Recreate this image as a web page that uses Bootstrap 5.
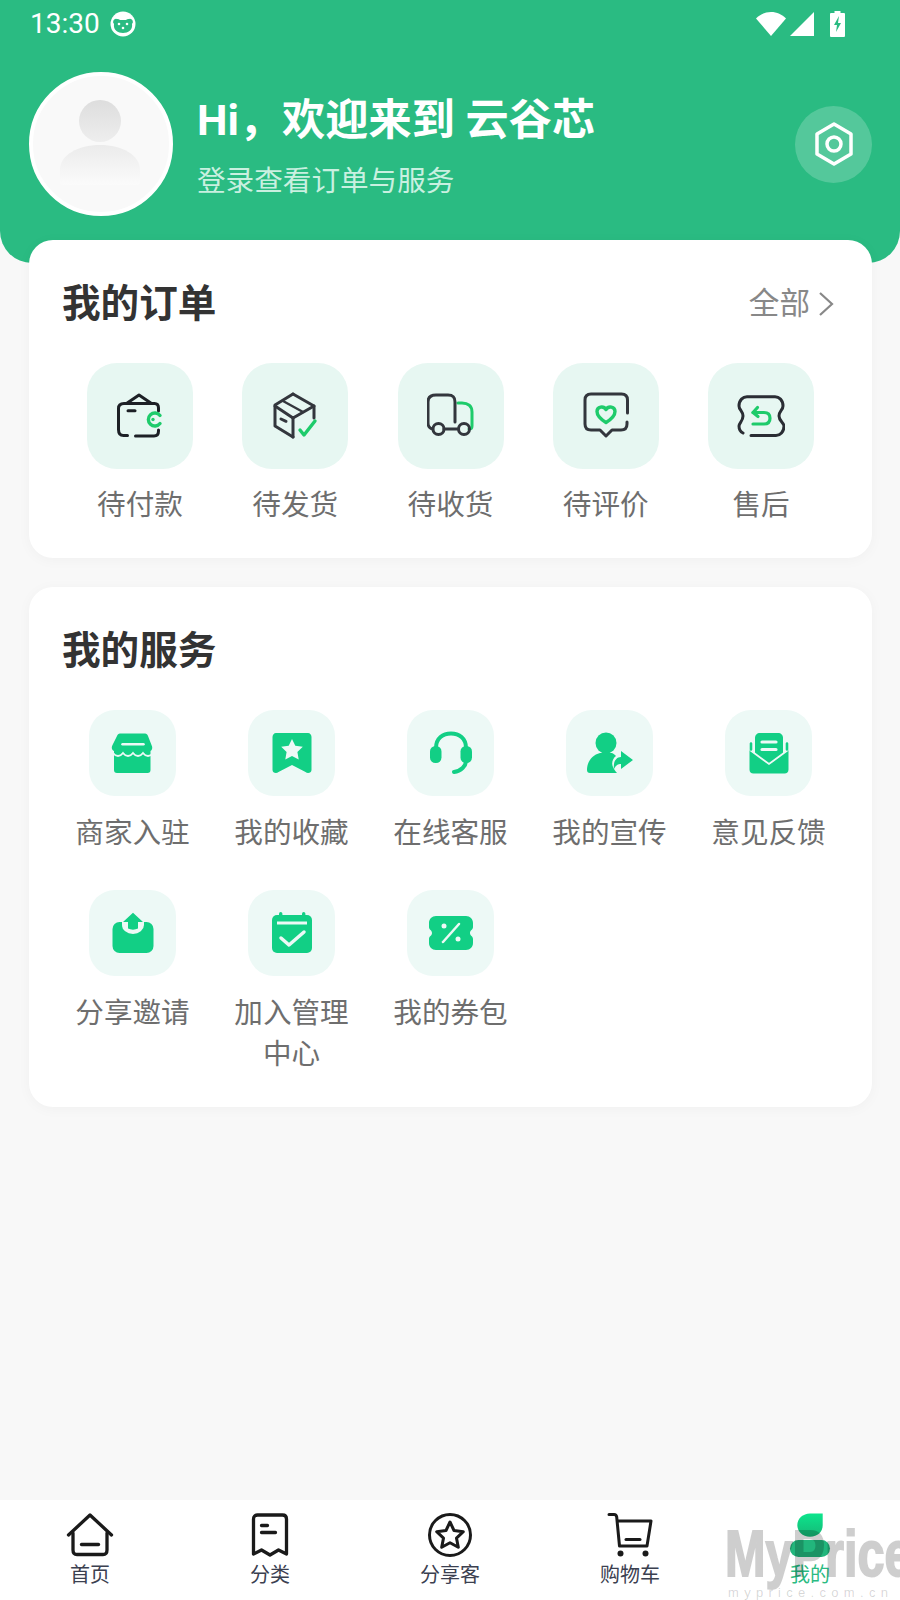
<!DOCTYPE html>
<html lang="zh-CN">
<head>
    <meta charset="UTF-8">
    <meta name="viewport" content="width=device-width, initial-scale=1">
    <title>我的</title>
    <link href="https://cdn.jsdelivr.net/npm/bootstrap@5.3.0/dist/css/bootstrap.min.css" rel="stylesheet">
    <style>
        body {
            background: #f8f8f8;
            font-family: Roboto, "Noto Sans CJK SC", sans-serif;
            min-height: 1600px;
            overflow: hidden;
        }
        .page-wrap { min-height: 1600px; }
        .hdr {
            background: #2abb82;
            height: 263px;
            border-radius: 0 0 32px 32px;
            padding: 0 28px 0 29px;
            color: #fff;
        }
        .status-row { height: 48px; padding-right: 27px; }
        .status-time { font-size: 28px; line-height: 48px; margin: 0 10px 0 1px; }
        .profile-row { margin-top: 24px; }
        .avatar-ring {
            width: 144px;
            height: 144px;
            border-radius: 50%;
            background: #f9f9f9;
            border: 4px solid #fff;
            flex: none;
        }
        .hi-text { font-size: 43.2px; font-weight: 700; line-height: 56px; margin: 0; }
        .sub-text { font-size: 28.6px; line-height: 40px; margin: 12px 0 0; color: #c9f0e0; }
        .profile-text { margin-left: 24px; padding-top: 6px; }
        .gear-btn {
            width: 77px;
            height: 77px;
            border-radius: 50%;
            background: rgba(255, 255, 255, .2);
            flex: none;
        }
        .panel {
            border: 0;
            border-radius: 24px;
            margin: 0 28px 29px 29px;
            box-shadow: 0 2px 14px rgba(0, 0, 0, .035);
        }
        .panel-order { margin-top: -23px; padding: 36px 58px 32px; }
        .panel-service { padding: 36px 24px 32px; }
        .panel-title { font-size: 38.6px; font-weight: 700; line-height: 56px; color: #333; margin: 0; }
        .panel-head { margin: 0 -24px 31px; }
        .panel-service .panel-title { padding-left: 9px; }
        .panel-order .panel-title { margin-left: -1px; }
        .more-link { font-size: 30.6px; color: #888; line-height: 56px; text-decoration: none; margin-right: 3px; }
        .order-item { width: 106px; }
        .order-tile {
            width: 106px;
            height: 106px;
            border-radius: 30px;
            background: #e7f7f2;
        }
        .item-label { font-size: 28.6px; line-height: 41px; color: #6e6e6e; text-align: center; }
        .order-item .item-label { margin: 16px -10px 0; }
        .service-tile {
            width: 87px;
            height: 86px;
            border-radius: 26px;
            background: #edf9f6;
        }
        .service-item .item-label { margin-top: 17px; max-width: 118px; }
        .service-second { margin-top: 36px; }
        .tabbar {
            height: 100px;
            background: #fff;
            overflow: hidden;
        }
        .tab-cell { width: 180px; padding-top: 12px; }
        .tab-label { font-size: 20px; line-height: 28px; color: #3b4050; margin-top: 1px; }
        .tab-on { color: #2abb82; }
        .mark-big {
            top: 19px;
            left: 725px;
            font-family: "Liberation Sans", sans-serif;
            font-weight: 700;
            font-size: 64px;
            line-height: 70px;
            color: #000;
            opacity: .19;
            -webkit-text-stroke: 2px #000;
            transform: scaleX(.76);
            transform-origin: left;
            white-space: nowrap;
        }
        .mark-small {
            top: 84px;
            left: 728px;
            font-family: "Liberation Sans", sans-serif;
            font-size: 13px;
            line-height: 18px;
            letter-spacing: 5.3px;
            color: rgba(0, 0, 0, .17);
            white-space: nowrap;
        }
    </style>
</head>
<body>
<div class="page-wrap d-flex flex-column">

    <!-- Header -->
    <header class="hdr">
        <div class="status-row d-flex align-items-center">
            <span class="status-time">13:30</span>
            <svg width="26" height="26" viewBox="0 0 26 26"><circle cx="13" cy="13" r="12.5" fill="#fff"/><path d="M4 13a3 3 0 0 1 3-5 4 4 0 0 1 3 1h6a4 4 0 0 1 3-1 3 3 0 0 1 3 5c1 6-4 9-9 9s-10-3-9-9z" fill="#2abb82"/><circle cx="9" cy="13" r="1.3" fill="#fff"/><circle cx="17" cy="13" r="1.3" fill="#fff"/><circle cx="13" cy="17" r="1.3" fill="#fff"/></svg>
            <div class="ms-auto d-flex align-items-center">
                <svg width="30" height="24" viewBox="0 0 30 24"><path d="M15 24 0 6.500C4 2.500 9 0 15 0s11 2.500 15 6.500z" fill="#fff"/></svg>
                <svg class="ms-1" width="24" height="24" viewBox="0 0 24 24"><path d="M24 0v24H0z" fill="#fff"/></svg>
                <svg class="ms-3" width="15" height="26" viewBox="0 0 15 26"><path d="M4.500 0h6v2H14a1 1 0 0 1 1 1v22a1 1 0 0 1-1 1H1a1 1 0 0 1-1-1V3a1 1 0 0 1 1-1h3.500z" fill="#fff"/><path d="M9 5 4 14h3l-1 7 5-9H8z" fill="#2abb82"/></svg>
            </div>
        </div>
        <div class="profile-row d-flex align-items-center">
            <div class="avatar-ring d-flex align-items-center justify-content-center">
                <svg width="136" height="136" viewBox="0 0 136 136">
                    <defs>
                        <linearGradient id="headFill" x1="0" y1="0" x2="0" y2="1"><stop offset="0" stop-color="#dddddd"/><stop offset="1" stop-color="#eeeeee"/></linearGradient>
                        <linearGradient id="bodyFill" x1="0" y1="0" x2="0" y2="1"><stop offset="0" stop-color="#ebebeb"/><stop offset="1" stop-color="#fbfbfb"/></linearGradient>
                    </defs>
                    <circle cx="67" cy="45" r="21" fill="url(#headFill)"/>
                    <path d="M27 106V94c0-15 18-25 40-25s40 10 40 25v12c0 2-1 3-3 3H30c-2 0-3-1-3-3z" fill="url(#bodyFill)"/>
                </svg>
            </div>
            <div class="profile-text flex-grow-1">
                <h1 class="hi-text">Hi，欢迎来到 云谷芯</h1>
                <p class="sub-text">登录查看订单与服务</p>
            </div>
            <div class="gear-btn d-flex align-items-center justify-content-center">
                <svg width="42" height="46" viewBox="0 0 42 46" fill="none" stroke="#fff" stroke-width="3.500" stroke-linejoin="round"><path d="M21 3 38 13v20L21 43 4 33V13z"/><circle cx="21" cy="23" r="7"/></svg>
            </div>
        </div>
    </header>

    <!-- My orders -->
    <section class="card panel panel-order">
        <div class="panel-head d-flex justify-content-between align-items-center">
            <h2 class="panel-title">我的订单</h2>
            <a class="more-link d-flex align-items-center" href="#">全部
                <svg class="ms-2" width="17" height="28" viewBox="0 0 17 28" fill="none" stroke="#888" stroke-width="2.200"><path d="M2 3l12 11L2 25"/></svg>
            </a>
        </div>
        <div class="d-flex justify-content-between">
            <div class="order-item">
                <div class="order-tile d-flex align-items-center justify-content-center">
                    <svg width="48" height="48" viewBox="0 0 48 48" fill="none" stroke="#1d2026" stroke-width="3" stroke-linecap="round" stroke-linejoin="round"><path d="M10.500 11.500 23 3l12.500 8.500z"/><path d="M42.500 19v-3c0-3-1.500-4.500-4-4.500H8c-3 0-5.500 1.500-5.500 5v21c0 4 2 6 5 6h4"/><path d="M19.500 44H38c3 0 4.500-2 4.500-5v-1"/><path d="M12 18.700h7"/><path d="M44 23.500a6.500 6.500 0 1 0 0 8" stroke="#1ecb6b" stroke-width="3.400"/><circle cx="37" cy="27.500" r="1.700" fill="#1ecb6b" stroke="none"/></svg>
                </div>
                <div class="item-label">待付款</div>
            </div>
            <div class="order-item">
                <div class="order-tile d-flex align-items-center justify-content-center">
                    <svg width="48" height="48" viewBox="0 0 48 48" fill="none" stroke="#33363d" stroke-width="3" stroke-linecap="round" stroke-linejoin="round"><path d="M22 2 4 13v21l18 11"/><path d="M22 2l21 12v12"/><path d="M4 14l18 12 21-12"/><path d="M22 26v19"/><path d="M12 9l20 11" stroke-width="2.400"/><path d="M10 27l5 2.300"/><path d="M29 38l4 5 11-14" stroke="#1ecb6b" stroke-width="3.400"/></svg>
                </div>
                <div class="item-label">待发货</div>
            </div>
            <div class="order-item">
                <div class="order-tile d-flex align-items-center justify-content-center">
                    <svg width="48" height="48" viewBox="0 0 48 48" fill="none" stroke="#33363d" stroke-width="3" stroke-linecap="round" stroke-linejoin="round"><path d="M31 11h4c6 0 10 3 10 9v14c0 2-1 3-3 3" stroke="#1ecb6b"/><path d="M28 30V10c0-5-2-7-7-7H9c-5 0-8 2-8 7v21c0 3 1 5 4.500 6"/><path d="M17 37h14.500"/><circle cx="11.500" cy="37" r="5.500"/><circle cx="37" cy="37" r="5.500"/></svg>
                </div>
                <div class="item-label">待收货</div>
            </div>
            <div class="order-item">
                <div class="order-tile d-flex align-items-center justify-content-center">
                    <svg width="48" height="48" viewBox="0 0 48 48" fill="none" stroke="#33363d" stroke-width="3" stroke-linecap="round" stroke-linejoin="round"><path d="M45.500 21V8c0-4-2-6-6-6H9C5 2 3 4 3 8v24c0 4 2 6 6 6h9l6 6 6-6h9c4 0 6-2 6-6v-2"/><path d="M24 30.500c-4-2.500-9-6-9-11 0-5 6.500-6 9-2 2.500-4 9-3 9 2 0 5-5 8.500-9 11z" stroke="#1ecb6b" stroke-width="3.400"/></svg>
                </div>
                <div class="item-label">待评价</div>
            </div>
            <div class="order-item">
                <div class="order-tile d-flex align-items-center justify-content-center">
                    <svg width="48" height="48" viewBox="0 0 48 48" fill="none" stroke="#2a2d34" stroke-width="3" stroke-linecap="round" stroke-linejoin="round"><path d="M6 41c-2-1-4-3-4-7 0-3 4-5 4-10s-4-6-4-10c0-6 4-9.300 8-9.300h28c4 0 8 3.300 8 9.300 0 4-4 5-4 10s5 7 5 10c0 6-4 9.500-8 9.500H14"/><path d="M20.500 15.500 16 20.500l5 4" stroke="#1ecb6b" stroke-width="3.200"/><path d="M16 20.500h11c4 0 6 2 6 5.750s-2 5.750-6 5.750H16" stroke="#1ecb6b" stroke-width="3.200"/></svg>
                </div>
                <div class="item-label">售后</div>
            </div>
        </div>
    </section>

    <!-- My services -->
    <section class="card panel panel-service">
        <div class="panel-head mx-0">
            <h2 class="panel-title">我的服务</h2>
        </div>
        <div class="row row-cols-5 g-0">
            <div class="col service-item d-flex flex-column align-items-center">
                <div class="service-tile d-flex align-items-center justify-content-center">
                    <svg width="44" height="44" viewBox="0 0 44 44"><path d="M9 2.500h25c1.500 0 2.500 1 3 2.500l3.500 9c1.500 3 .5 5-1 6v19c0 2-1 3-3 3H6c-2 0-3-1-3-3V20c-2-1-3-3-1.500-6L6 5c.5-1.500 1.500-2.500 3-2.500z" fill="#12cf85"/><path d="M2 22c3 4 7 4 10 0 3 4 7 4 10 0 3 4 7 4 10 0 3 4 7 4 10 0" fill="none" stroke="#edf9f6" stroke-width="1.800"/><path d="M11.500 13.300h21" stroke="#edf9f6" stroke-width="2.500" stroke-linecap="round"/></svg>
                </div>
                <div class="item-label">商家入驻</div>
            </div>
            <div class="col service-item d-flex flex-column align-items-center">
                <div class="service-tile d-flex align-items-center justify-content-center">
                    <svg width="44" height="44" viewBox="0 0 44 44"><path d="M6 2h32c2 0 3.500 2 3.500 4v33c0 3-4 4-6 2L22 34 8.500 41c-2 2-6 1-6-2V6c0-2 1.500-4 3.500-4z" fill="#12cf85"/><path d="M22 8l3.300 6.800 7.500 1-5.400 5.200 1.300 7.500-6.700-3.600-6.700 3.600 1.300-7.500-5.400-5.200 7.500-1z" fill="#edf9f6"/></svg>
                </div>
                <div class="item-label">我的收藏</div>
            </div>
            <div class="col service-item d-flex flex-column align-items-center">
                <div class="service-tile d-flex align-items-center justify-content-center">
                    <svg width="44" height="44" viewBox="0 0 44 44" fill="none" stroke="#12cf85" stroke-width="4" stroke-linecap="round"><path d="M7 17C7 7 14 2.500 22 2.500S37 7 37 17"/><path d="M37 30c0 5-5 10-12 11"/><rect x="1" y="15" width="11.500" height="17" rx="5.500" fill="#12cf85" stroke="none"/><rect x="31.500" y="15" width="11.500" height="17" rx="5.500" fill="#12cf85" stroke="none"/></svg>
                </div>
                <div class="item-label">在线客服</div>
            </div>
            <div class="col service-item d-flex flex-column align-items-center">
                <div class="service-tile d-flex align-items-center justify-content-center">
                    <svg width="46" height="44" viewBox="0 0 46 44"><circle cx="19" cy="12" r="10.500" fill="#12cf85"/><path d="M13 22h12c2 1 3 2 4 3-3 2-5 7-3 11 1 2 2 4 4 6H3c-2 0-3-1-3-3 0-8 5-15 13-17z" fill="#12cf85"/><path d="M34 20l12 9-12 9v-5c-3 0-5 1-7 5-1-7 2-12 7-12z" fill="#12cf85"/></svg>
                </div>
                <div class="item-label">我的宣传</div>
            </div>
            <div class="col service-item d-flex flex-column align-items-center">
                <div class="service-tile d-flex align-items-center justify-content-center">
                    <svg width="44" height="44" viewBox="0 0 44 44"><path d="M13 2h18c3 0 5 2 5 5v19L22 33 8 26V7c0-3 2-5 5-5z" fill="#12cf85"/><path d="M15 11h14M15 18.500h14" stroke="#edf9f6" stroke-width="3.200" stroke-linecap="round"/><path d="M2.500 19v19.500c0 2.500 1.500 4 4 4h31c2.500 0 4-1.500 4-4V19L22 33z" fill="#12cf85"/><path d="M3 19 22 33 41 19" fill="none" stroke="#edf9f6" stroke-width="1.800"/><path d="M4 12.500v6M40 12.500v6" stroke="#12cf85" stroke-width="2.600" stroke-linecap="round"/></svg>
                </div>
                <div class="item-label">意见反馈</div>
            </div>
        </div>
        <div class="row row-cols-5 g-0 service-second">
            <div class="col service-item d-flex flex-column align-items-center">
                <div class="service-tile d-flex align-items-center justify-content-center">
                    <svg width="44" height="44" viewBox="0 0 44 44"><rect x="1.500" y="11" width="41" height="31" rx="7" fill="#12cf85"/><path d="M11 8h22v6a11 9 0 0 1-22 0z" fill="#edf9f6"/><path d="M22 1.700 32 11h-5v6.500c-3 1.500-7 1.500-10 0V11h-5z" fill="#12cf85"/></svg>
                </div>
                <div class="item-label">分享邀请</div>
            </div>
            <div class="col service-item d-flex flex-column align-items-center">
                <div class="service-tile d-flex align-items-center justify-content-center">
                    <svg width="44" height="44" viewBox="0 0 44 44"><rect x="2" y="4" width="40" height="38" rx="5" fill="#12cf85"/><rect x="9" y="1" width="3.400" height="8" rx="1.700" fill="#12cf85"/><rect x="32" y="1" width="3.400" height="8" rx="1.700" fill="#12cf85"/><path d="M7 12h30" stroke="#edf9f6" stroke-width="3"/><path d="M11 27l8 7 15-13" fill="none" stroke="#edf9f6" stroke-width="3.500" stroke-linecap="round" stroke-linejoin="round"/></svg>
                </div>
                <div class="item-label">加入管理中心</div>
            </div>
            <div class="col service-item d-flex flex-column align-items-center">
                <div class="service-tile d-flex align-items-center justify-content-center">
                    <svg width="44" height="44" viewBox="0 0 44 44"><path d="M7 5h30c4 0 7 3 7 7v4c0 3-3 3-3 6s3 3 3 6v4c0 4-3 7-7 7H7c-4 0-7-3-7-7v-4c0-3 3-3 3-6s-3-3-3-6v-4c0-4 3-7 7-7z" fill="#12cf85"/><path d="M14 31l16-18" stroke="#edf9f6" stroke-width="2.500" stroke-linecap="round"/><circle cx="15" cy="15" r="2.500" fill="#edf9f6"/><circle cx="29" cy="28" r="2.500" fill="#edf9f6"/></svg>
                </div>
                <div class="item-label">我的券包</div>
            </div>
        </div>
    </section>

    <!-- Bottom tabs -->
    <nav class="tabbar mt-auto d-flex position-relative">
        <a class="tab-cell d-flex flex-column align-items-center text-decoration-none" href="#">
            <svg width="48" height="48" viewBox="0 0 48 48" fill="none" stroke="#1a1a1a" stroke-width="3.300" stroke-linecap="round" stroke-linejoin="round"><path d="M2.500 23 24 3l21.500 20"/><path d="M7 21v17c0 3 1.500 4.500 4 4.500h26c2.500 0 4-1.500 4-4.500V21"/><path d="M15.500 32.500h17"/></svg>
            <span class="tab-label">首页</span>
        </a>
        <a class="tab-cell d-flex flex-column align-items-center text-decoration-none" href="#">
            <svg width="48" height="48" viewBox="0 0 48 48" fill="none" stroke="#1a1a1a" stroke-width="3.300" stroke-linecap="round" stroke-linejoin="round"><path d="M7.500 42V7c0-2.500 1.500-4 4-4h25c2.500 0 4 1.500 4 4v35l-8-4-8.500 5-8.500-5z"/><path d="M15.500 13.500h6M15.500 20.500h14"/></svg>
            <span class="tab-label">分类</span>
        </a>
        <a class="tab-cell d-flex flex-column align-items-center text-decoration-none" href="#">
            <svg width="48" height="48" viewBox="0 0 48 48" fill="none" stroke="#1a1a1a" stroke-width="3" stroke-linejoin="round"><circle cx="24" cy="23" r="20.500"/><path d="M24 10l4 8.500 9.300 1.200-6.800 6.400 1.800 9.200-8.300-4.500-8.300 4.500 1.800-9.200-6.800-6.400 9.300-1.200z"/></svg>
            <span class="tab-label">分享客</span>
        </a>
        <a class="tab-cell d-flex flex-column align-items-center text-decoration-none" href="#">
            <svg width="48" height="48" viewBox="0 0 48 48" fill="none" stroke="#1a1a1a" stroke-width="3" stroke-linecap="round" stroke-linejoin="round"><path d="M3 2.500h5c1.500 0 2.500 1 2.700 2.500l2.800 29h27.500L45 9H11"/><path d="M20 27.500h14"/><circle cx="14.500" cy="41.500" r="3" fill="#1a1a1a" stroke="none"/><circle cx="39.500" cy="41.500" r="3" fill="#1a1a1a" stroke="none"/></svg>
            <span class="tab-label">购物车</span>
        </a>
        <a class="tab-cell d-flex flex-column align-items-center text-decoration-none" href="#">
            <svg width="48" height="48" viewBox="0 0 48 48">
                <defs>
                    <linearGradient id="leafFill" x1="0" y1="0" x2="0" y2="1"><stop offset="0" stop-color="#0ce58c"/><stop offset="1" stop-color="#16b877"/></linearGradient>
                </defs>
                <path d="M24 1.500h12.700V13c0 7-5 11.700-12.700 11.700S11.300 19.500 11.300 13 17 1.500 24 1.500z" fill="url(#leafFill)"/>
                <rect x="4" y="28" width="40" height="17" rx="8.500" fill="#22b67c"/>
            </svg>
            <span class="tab-label tab-on">我的</span>
        </a>
        <!-- watermark lies over the tab bar -->
        <div class="mark-big position-absolute">MyPrice</div>
        <div class="mark-small position-absolute">myprice.com.cn</div>
    </nav>

</div>
<script src="https://cdn.jsdelivr.net/npm/bootstrap@5.3.0/dist/js/bootstrap.bundle.min.js"></script>
</body>
</html>
